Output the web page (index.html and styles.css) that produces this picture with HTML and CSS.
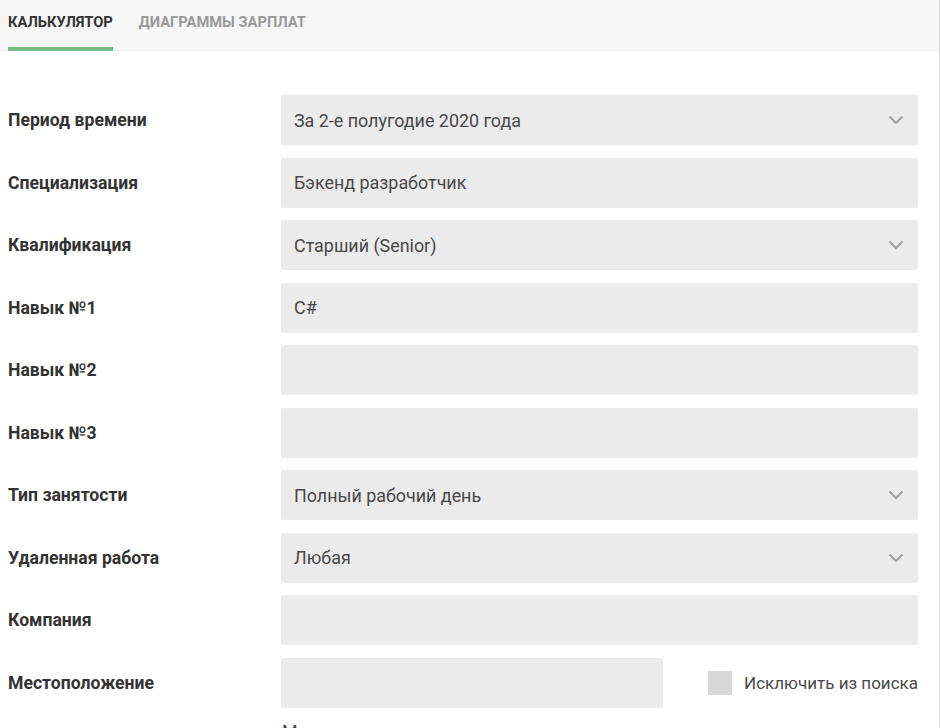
FILE: index.html
```html
<!DOCTYPE html>
<html lang="ru">
<head>
<meta charset="utf-8">
<link rel="stylesheet" href="styles.css">
</head>
<body>
<div class="page">
  <div class="tabs">
    <div class="tab active">КАЛЬКУЛЯТОР</div>
    <div class="tab">ДИАГРАММЫ ЗАРПЛАТ</div>
  </div>
  <form class="form">
    <div class="row">
      <div class="label">Период времени</div>
      <div class="field select">За 2-е полугодие 2020 года<svg class="chev" viewBox="0 0 16 10"><path d="M1.5 1.5 L8 8 L14.5 1.5"/></svg></div>
    </div>
    <div class="row">
      <div class="label">Специализация</div>
      <div class="field">Бэкенд разработчик</div>
    </div>
    <div class="row">
      <div class="label">Квалификация</div>
      <div class="field select">Старший (Senior)<svg class="chev" viewBox="0 0 16 10"><path d="M1.5 1.5 L8 8 L14.5 1.5"/></svg></div>
    </div>
    <div class="row">
      <div class="label">Навык №1</div>
      <div class="field">C#</div>
    </div>
    <div class="row">
      <div class="label">Навык №2</div>
      <div class="field"></div>
    </div>
    <div class="row">
      <div class="label">Навык №3</div>
      <div class="field"></div>
    </div>
    <div class="row">
      <div class="label">Тип занятости</div>
      <div class="field select">Полный рабочий день<svg class="chev" viewBox="0 0 16 10"><path d="M1.5 1.5 L8 8 L14.5 1.5"/></svg></div>
    </div>
    <div class="row">
      <div class="label">Удаленная работа</div>
      <div class="field select">Любая<svg class="chev" viewBox="0 0 16 10"><path d="M1.5 1.5 L8 8 L14.5 1.5"/></svg></div>
    </div>
    <div class="row">
      <div class="label">Компания</div>
      <div class="field"></div>
    </div>
    <div class="row">
      <div class="label">Местоположение</div>
      <div class="loc">
        <div class="field short"></div>
        <label class="check"><span class="box"></span>Исключить из поиска</label>
      </div>
    </div>
    <div class="row">
      <div class="label"></div>
      <div class="hint">Можно указать город или регион</div>
    </div>
  </form>
</div>
</body>
</html>
```
FILE: styles.css
```css
html, body {
  margin: 0;
  padding: 0;
  background: #fff;
}
body {
  font-family: Roboto, "Noto Sans", sans-serif;
  color: #333;
}
.page {
  width: 939px;
  border-right: 1px solid #e0e0e0;
  height: 728px;
  overflow: hidden;
}
.tabs {
  display: flex;
  gap: 26px;
  height: 51px;
  padding-left: 8px;
  background: #f6f6f6;
  border-bottom: 1px solid #efefef;
  box-sizing: border-box;
}
.tab {
  font-size: 14.7px;
  font-weight: 700;
  color: #999;
  height: 51px;
  line-height: 44px;
  box-sizing: border-box;
}
.tab.active {
  color: #333;
  border-bottom: 4px solid #78bd84;
}
.form {
  padding: 44px 21px 0 8px;
  display: flex;
  flex-direction: column;
  gap: 12.5px;
}
.row {
  display: grid;
  grid-template-columns: 273px 637px;
  align-items: center;
}
.label {
  font-size: 17.6px;
  font-weight: 700;
  color: #333;
}
.field {
  height: 50px;
  background: #ebebeb;
  border-radius: 2px;
  display: flex;
  align-items: center;
  justify-content: space-between;
  padding: 0 14px 0 13px;
  box-sizing: border-box;
  font-size: 17.9px;
  color: #484848;
}
.chev {
  width: 16px;
  height: 10px;
  fill: none;
  stroke: #a0a0a0;
  stroke-width: 2;
}
.loc {
  display: flex;
  align-items: center;
  justify-content: space-between;
}
.field.short {
  width: 382px;
}
.check {
  display: flex;
  align-items: center;
  gap: 12px;
  font-size: 17px;
  color: #484848;
}
.box {
  width: 24px;
  height: 24px;
  background: #d7d7d7;
}
.hint {
  font-size: 17.9px;
  line-height: 20px;
  color: #484848;
  padding: 2px 0 0 1px;
}
```
